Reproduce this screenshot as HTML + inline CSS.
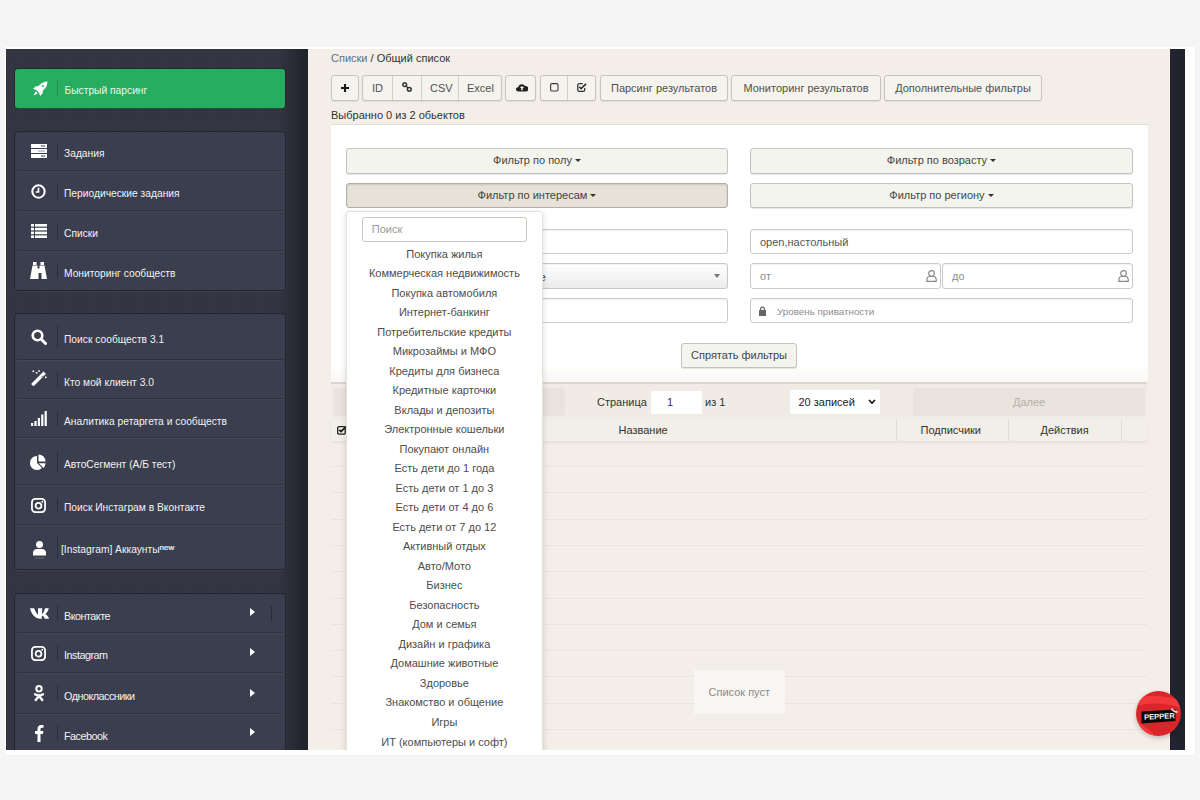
<!DOCTYPE html><html><head><meta charset="utf-8"><style>
*{box-sizing:border-box;margin:0;padding:0}
html,body{width:1200px;height:800px;overflow:hidden;background:#f5f5f5;font-family:"Liberation Sans",sans-serif}
div,span,svg{position:absolute}
#frame{left:5px;top:47px;width:1190px;height:708px;background:#fff}
#shot{left:0;top:0;width:1200px;height:800px;clip-path:inset(49px 15px 50px 6px);background:#f3eee7}
#side{left:6px;top:49px;width:302px;height:701px;background:#343744;
 background-image:linear-gradient(90deg,rgba(0,0,0,0) 272px,rgba(0,0,0,.38) 302px),repeating-linear-gradient(0deg,rgba(0,0,0,.045) 0 1px,rgba(0,0,0,0) 1px 3px),repeating-linear-gradient(90deg,rgba(0,0,0,.045) 0 1px,rgba(0,0,0,0) 1px 3px)}
#rbar{left:1170px;top:49px;width:15px;height:701px;background:#21242e}
.green{left:14.5px;top:68.5px;width:270.5px;height:39px;background:#27ad60;border-radius:3px;box-shadow:0 1px 0 #1b4f33,0 0 0 1px #22262e}
.panel{left:14.5px;width:270.5px;background:#3a3e4e;border-radius:4px;box-shadow:0 0 0 1px #22252f,0 1px 0 1px rgba(255,255,255,.05)}
.rdiv{left:2.5px;right:2.5px;height:2px;border-top:1px solid #2e313d;border-bottom:1px solid #424656}
.ico{color:#fff}
.sep{width:1px;height:15px;background:#2a2d39}
.lbl{font-size:10.25px;color:#f2f2f2;white-space:nowrap;line-height:12px}
.arr{width:0;height:0;border-top:4.5px solid transparent;border-bottom:4.5px solid transparent;border-left:5.5px solid #fff}
.btn{top:75px;height:26px;background:#f5f3ee;border:1px solid #c8c4bb;border-radius:3px;font-size:11px;color:#505050;text-align:center;line-height:25px;white-space:nowrap;box-shadow:0 1px 1px rgba(0,0,0,.08)}
.bdiv{top:0;width:1px;height:24px;background:#d3cfc7}
.txt{font-size:11px;color:#333;white-space:nowrap;line-height:13px}
.fbtn{height:25px;background:#f4f4ee;border:1px solid #c3c3bf;border-radius:3px;font-size:11px;color:#444;text-align:center;line-height:23px;box-shadow:0 1px 1px rgba(0,0,0,.1);white-space:nowrap}
.inp{height:25px;background:#fff;border:1px solid #cbcbcb;border-radius:3px;font-size:11px;color:#555;box-shadow:inset 0 1px 1px rgba(0,0,0,.06);line-height:25px;padding-left:9px;white-space:nowrap}
.ph{color:#8e8e8e}
.item{left:0;width:100%;text-align:center;font-size:11px;color:#4d4d4d;white-space:nowrap;line-height:13px}
.tline{left:331px;width:816px;height:1px;background:#eae4da}
</style></head><body>
<div id="frame"></div><div id="shot">
<div id="side"></div>
<div id="rbar"></div>
<div class="green"><svg class="ico" style="left:17px;top:12px" width="16" height="16" viewBox="0 0 16 16"><path fill="#fff" d="M15.5.5C12 .5 9 2 6.5 5L3.5 5.5 1 8l3 .8L7.2 12l.8 3 2.5-2.5.5-3C14 7 15.5 4 15.5.5z"/><circle cx="11" cy="5" r="1" fill="#29ae61"/><path fill="#fff" d="M3.6 10.2 1.5 14.5l4.3-2.1z"/></svg><div class="sep" style="left:42.5px;top:12px;background:#218c4e"></div><div class="lbl" style="left:50px;top:16px;color:#e9f6ee">Быстрый парсинг</div></div>
<div class="panel" style="top:131.5px;height:158.5px">
<div style="left:0;top:19.75px;width:100%;height:0">
<svg style="left:16px;top:-7px" width="16" height="14" viewBox="0 0 16 14"><rect x="0" y="0" width="16" height="4" fill="#fff"/><rect x="0" y="5" width="16" height="4" fill="#fff"/><rect x="0" y="10" width="16" height="4" fill="#fff"/><rect x="10" y="1.5" width="4" height="1" fill="#3a3e4f"/><rect x="7" y="6.5" width="7" height="1" fill="#9a9ca4"/><rect x="10" y="11.5" width="4" height="1" fill="#3a3e4f"/></svg>
<div class="sep" style="left:42.5px;top:-7.5px;height:15px"></div>
<div class="lbl" style="left:49.5px;top:-3px;">Задания</div>
</div>
<div class="rdiv" style="top:38.5px"></div>
<div style="left:0;top:59.5px;width:100%;height:0">
<svg style="left:16.5px;top:-7.5px" width="15" height="15" viewBox="0 0 16 16"><circle cx="8" cy="8" r="6.6" fill="none" stroke="#fff" stroke-width="2.2"/><path d="M8 4v4.5H5" fill="none" stroke="#fff" stroke-width="1.8"/></svg>
<div class="sep" style="left:42.5px;top:-7.5px;height:15px"></div>
<div class="lbl" style="left:49.5px;top:-3px;">Периодические задания</div>
</div>
<div class="rdiv" style="top:78.5px"></div>
<div style="left:0;top:99.5px;width:100%;height:0">
<svg style="left:16px;top:-7px" width="16" height="14" viewBox="0 0 16 14"><g fill="#fff"><rect x="0" y="0" width="3" height="2.6"/><rect x="4" y="0" width="12" height="2.6"/><rect x="0" y="3.8" width="3" height="2.6"/><rect x="4" y="3.8" width="12" height="2.6"/><rect x="0" y="7.6" width="3" height="2.6"/><rect x="4" y="7.6" width="12" height="2.6"/><rect x="0" y="11.4" width="3" height="2.6"/><rect x="4" y="11.4" width="12" height="2.6"/></g></svg>
<div class="sep" style="left:42.5px;top:-7.5px;height:15px"></div>
<div class="lbl" style="left:49.5px;top:-3px;">Списки</div>
</div>
<div class="rdiv" style="top:118.5px"></div>
<div style="left:0;top:139px;width:100%;height:0">
<svg style="left:15.5px;top:-8.5px" width="17" height="17" viewBox="0 0 17 17"><g fill="#fff"><rect x="3" y="0" width="3.5" height="3"/><rect x="10.5" y="0" width="3.5" height="3"/><path d="M2.5 3.5h5v3h2v-3h5L17 17h-5.5V11h-3v6H0z"/></g></svg>
<div class="sep" style="left:42.5px;top:-7.5px;height:15px"></div>
<div class="lbl" style="left:49.5px;top:-3px;">Мониторинг сообществ</div>
</div>
</div>
<div class="panel" style="top:313.5px;height:255.5px">
<div style="left:0;top:23.25px;width:100%;height:0">
<svg style="left:16px;top:-8px" width="16" height="16" viewBox="0 0 16 16"><circle cx="6.5" cy="6.5" r="4.8" fill="none" stroke="#fff" stroke-width="2.6"/><path d="M10 10l4.5 4.5" stroke="#fff" stroke-width="3" stroke-linecap="round"/></svg>
<div class="sep" style="left:42.5px;top:-11px;height:22px"></div>
<div class="lbl" style="left:49.5px;top:-3px;">Поиск сообществ 3.1</div>
</div>
<div class="rdiv" style="top:45.5px"></div>
<div style="left:0;top:66px;width:100%;height:0">
<svg style="left:16px;top:-9.5px" width="16" height="16" viewBox="0 0 16 16"><path d="M2.5 14l10-10" stroke="#fff" stroke-width="3.4" stroke-linecap="square"/><path d="M10.3 7.3l1.6-1.6" stroke="#3a3e4f" stroke-width=".9"/><g fill="#fff"><rect x="1.5" y=".5" width="1.6" height="1.6"/><rect x="4.8" y="2" width="1.6" height="1.6"/><rect x="7.2" y=".2" width="1.6" height="1.6"/><rect x="14" y="6.5" width="1.6" height="1.6"/></g></svg>
<div class="sep" style="left:42.5px;top:-7.5px;height:15px"></div>
<div class="lbl" style="left:49.5px;top:-3px;">Кто мой клиент 3.0</div>
</div>
<div class="rdiv" style="top:84.5px"></div>
<div style="left:0;top:105px;width:100%;height:0">
<svg style="left:16px;top:-7.5px" width="16" height="15" viewBox="0 0 16 15"><g fill="#fff"><rect x="0" y="12" width="2.2" height="3"/><rect x="3.4" y="10" width="2.2" height="5"/><rect x="6.8" y="7" width="2.2" height="8"/><rect x="10.2" y="3.5" width="2.2" height="11.5"/><rect x="13.6" y="0" width="2.2" height="15"/></g></svg>
<div class="sep" style="left:42.5px;top:-7.5px;height:15px"></div>
<div class="lbl" style="left:49.5px;top:-3px;">Аналитика ретаргета и сообществ</div>
</div>
<div class="rdiv" style="top:123.5px"></div>
<div style="left:0;top:148px;width:100%;height:0">
<svg style="left:15.5px;top:-8px" width="16" height="16" viewBox="0 0 16 16"><path d="M7 9V2A7 7 0 1 0 11.95 13.95z" fill="#fff"/><path d="M8.5 7.5V.5A7 7 0 0 1 15.5 7.5z" fill="#fff"/><path d="M8.7 9.2h6.8A7 7 0 0 1 13.5 14z" fill="#fff"/></svg>
<div class="sep" style="left:42.5px;top:-11px;height:22px"></div>
<div class="lbl" style="left:49.5px;top:-3px;">АвтоСегмент (А/Б тест)</div>
</div>
<div class="rdiv" style="top:170.5px"></div>
<div style="left:0;top:191.5px;width:100%;height:0">
<svg style="left:16.5px;top:-7.5px" width="15" height="15" viewBox="0 0 16 16"><rect x="1" y="1" width="14" height="14" rx="3.5" fill="none" stroke="#fff" stroke-width="1.9"/><circle cx="8" cy="8.2" r="3.1" fill="none" stroke="#fff" stroke-width="1.9"/><circle cx="12" cy="4" r="1" fill="#fff"/></svg>
<div class="sep" style="left:42.5px;top:-7.5px;height:15px"></div>
<div class="lbl" style="left:49.5px;top:-3px;">Поиск Инстаграм в Вконтакте</div>
</div>
<div class="rdiv" style="top:210.5px"></div>
<div style="left:0;top:233.5px;width:100%;height:0">
<svg style="left:18px;top:-8.5px" width="13" height="20" viewBox="0 0 13 20"><circle cx="6.5" cy="5.4" r="3.5" fill="#fff"/><path d="M0 16.5V13.6C0 11.5 1.8 10 4 10h5c2.2 0 4 1.5 4 3.6v2.9z" fill="#fff"/><rect x="1.5" y="18.7" width="10" height=".8" fill="#6d707b"/></svg>
<div class="sep" style="left:42.5px;top:-11px;height:22px"></div>
<div class="lbl" style="left:49.5px;top:-3px;"><span style="position:relative;left:-3px">[Instagram] Аккаунты<sup style="font-size:8px;vertical-align:top;position:relative;top:-2.5px;-webkit-text-stroke:.2px #fff">new</sup></span></div>
</div>
</div>
<div class="panel" style="top:593.5px;height:196.5px">
<div style="left:0;top:19.75px;width:100%;height:0">
<svg style="left:15px;top:-5.5px" width="19" height="11" viewBox="0 0 19 11"><path fill="#fff" d="M0 .3h3.8c.3 0 .5.2.6.4C5.5 3.4 6.8 6 8 6.6V.3h4.2l-.3 5.8C13 5.6 14.5 3 15 .3h3.8c-.5 2.8-2.5 5-3.5 5.7 1.2.6 3 2.3 3.7 4.8h-4c-.6-1.3-1.7-3-3.2-3.4V10.8h-1.3C5 10.8 1.5 6.5 0 .3z"/></svg>
<div class="sep" style="left:42.5px;top:-7.5px;height:15px"></div>
<div class="lbl" style="left:49.5px;top:-3px;font-size:10.8px;letter-spacing:-.5px">Вконтакте</div>
<div class="arr" style="left:235.5px;top:-5px"></div>
<div class="sep" style="left:256.5px;top:-7.5px"></div>
</div>
<div class="rdiv" style="top:38.5px"></div>
<div style="left:0;top:59.5px;width:100%;height:0">
<svg style="left:16.5px;top:-7.5px" width="15" height="15" viewBox="0 0 16 16"><rect x="1" y="1" width="14" height="14" rx="3.5" fill="none" stroke="#fff" stroke-width="1.9"/><circle cx="8" cy="8.2" r="3.1" fill="none" stroke="#fff" stroke-width="1.9"/><circle cx="12" cy="4" r="1" fill="#fff"/></svg>
<div class="sep" style="left:42.5px;top:-7.5px;height:15px"></div>
<div class="lbl" style="left:49.5px;top:-4px;font-size:10.8px;letter-spacing:-.5px">Instagram</div>
<div class="arr" style="left:235.5px;top:-5px"></div>
</div>
<div class="rdiv" style="top:78.5px"></div>
<div style="left:0;top:100px;width:100%;height:0">
<svg style="left:19.5px;top:-8.5px" width="10" height="17" viewBox="0 0 10 17"><circle cx="5" cy="3.7" r="2.7" fill="none" stroke="#fff" stroke-width="2"/><path d="M1 9.3c2.6 1.6 5.4 1.6 8 0M5 10.8 1.8 15M5 10.8l3.2 4.2" fill="none" stroke="#fff" stroke-width="2.4" stroke-linecap="round"/></svg>
<div class="sep" style="left:42.5px;top:-7.5px;height:15px"></div>
<div class="lbl" style="left:49.5px;top:-4px;font-size:10.8px;letter-spacing:-.5px">Одноклассники</div>
<div class="arr" style="left:235.5px;top:-5px"></div>
</div>
<div class="rdiv" style="top:119.5px"></div>
<div style="left:0;top:139.5px;width:100%;height:0">
<svg style="left:20px;top:-8.5px" width="9" height="17" viewBox="0 0 9 17"><path fill="#fff" d="M2.5 17V9H0V6h2.5V4c0-2.6 1.5-4 3.8-4 1.1 0 2 .1 2.2.1v2.7H7c-1.2 0-1.5.6-1.5 1.4V6H8.4L8 9H5.5v8z"/></svg>
<div class="sep" style="left:42.5px;top:-7.5px;height:15px"></div>
<div class="lbl" style="left:49.5px;top:-3px;font-size:10.8px;letter-spacing:-.5px">Facebook</div>
<div class="arr" style="left:235.5px;top:-5px"></div>
</div>
</div>
<div class="txt" style="left:331px;top:52px"><span style="position:relative;color:#5d7089">Списки</span> / Общий список</div>
<div class="btn" style="left:331px;width:28px;"><svg style="left:9px;top:7.5px" width="8" height="8" viewBox="0 0 8 8"><path d="M4 0v8M0 4h8" stroke="#1a1a1a" stroke-width="2.1"/></svg></div>
<div class="btn" style="left:362px;width:140px;"><span style="left:9px;top:0">ID</span><div class="bdiv" style="left:28.5px"></div><svg style="left:38.5px;top:6px" width="10" height="10" viewBox="0 0 10 10"><g fill="none" stroke="#333" stroke-width="1.5"><circle cx="2.7" cy="2.7" r="1.9"/><circle cx="7.3" cy="7.3" r="1.9"/><path d="M4 4l2 2"/></g></svg><div class="bdiv" style="left:57.5px"></div><span style="left:67px;top:0">CSV</span><div class="bdiv" style="left:94.5px"></div><span style="left:104px;top:0">Excel</span></div>
<div class="btn" style="left:505px;width:31px;"><svg style="left:9.5px;top:7px" width="12" height="8.5" viewBox="0 0 12 10" preserveAspectRatio="none"><path fill="#222" d="M3 10H2.5A2.5 2.5 0 0 1 2.3 5 3.5 3.5 0 0 1 9 3.6 3.2 3.2 0 0 1 9.5 10z"/><path fill="#f5f3ee" d="M6 3.5 3.8 6h1.4v2.5h1.6V6h1.4z"/></svg></div>
<div class="btn" style="left:540px;width:56px;"><svg style="left:9px;top:7px" width="9" height="9" viewBox="0 0 9 9"><rect x=".6" y=".6" width="7.4" height="7.4" rx="1.4" fill="none" stroke="#3a3a3a" stroke-width="1.1"/></svg><div class="bdiv" style="left:26px"></div><svg style="left:35.5px;top:7px" width="10" height="9" viewBox="0 0 11 10"><path d="M8.5 5.5v2.2a1.5 1.5 0 0 1-1.5 1.5H2.3A1.5 1.5 0 0 1 .8 7.7V2.3A1.5 1.5 0 0 1 2.3.8h4" fill="none" stroke="#333" stroke-width="1.4"/><path d="M2.5 4.3 4.5 6.3 10 1" fill="none" stroke="#333" stroke-width="1.7"/></svg></div>
<div class="btn" style="left:600px;width:128px;">Парсинг результатов</div>
<div class="btn" style="left:731px;width:150px;">Мониторинг результатов</div>
<div class="btn" style="left:884px;width:158px;">Дополнительные фильтры</div>
<div class="txt" style="left:331px;top:109px">Выбранно 0 из 2 обьектов</div>
<div style="left:331px;top:123.5px;width:816.5px;height:260px;background:linear-gradient(#fff 0,#fff 240px,#f8f7f4 258px);border-top:1px solid #e3ded5"></div>
<div class="fbtn" style="left:346px;top:148px;width:382px;height:26px;">Фильтр по полу <span style="position:relative;display:inline-block;width:0;height:0;border-left:3px solid transparent;border-right:3px solid transparent;border-top:3px solid #333;top:-2px"></span></div>
<div class="fbtn" style="left:750px;top:148px;width:383px;height:26px;">Фильтр по возрасту <span style="position:relative;display:inline-block;width:0;height:0;border-left:3px solid transparent;border-right:3px solid transparent;border-top:3px solid #333;top:-2px"></span></div>
<div class="fbtn" style="left:346px;top:183px;width:382px;height:25px;background:#e7e2d8;border-color:#b3aea4;box-shadow:inset 0 1px 2px rgba(0,0,0,.12)">Фильтр по интересам <span style="position:relative;display:inline-block;width:0;height:0;border-left:3px solid transparent;border-right:3px solid transparent;border-top:3px solid #333;top:-2px"></span></div>
<div class="fbtn" style="left:750px;top:183px;width:383px;height:25px;">Фильтр по региону <span style="position:relative;display:inline-block;width:0;height:0;border-left:3px solid transparent;border-right:3px solid transparent;border-top:3px solid #333;top:-2px"></span></div>
<div class="inp" style="left:346px;top:229px;width:382px;height:25px;"></div>
<div class="inp" style="left:750px;top:229px;width:383px;height:25px;">open,настольный</div>
<div class="inp" style="left:346px;top:263px;width:382px;height:26px;background:linear-gradient(#fff,#ececec);border-color:#c6c6c6"><span style="right:181px;top:0.5px;color:#444">Выберите значение</span><div style="left:367px;top:10px;width:0;height:0;border-left:3.5px solid transparent;border-right:3.5px solid transparent;border-top:4px solid #777"></div></div>
<div class="inp" style="left:750px;top:263px;width:191px;height:26px;"><span class="ph" style="left:9px;top:0">от</span><svg style="left:175px;top:6px" width="11" height="12" viewBox="0 0 11 12"><circle cx="5.5" cy="3.5" r="2.8" fill="none" stroke="#888" stroke-width="1.2"/><path d="M.8 11.3V9.5c0-1.8 1.3-3 3-3h3.4c1.7 0 3 1.2 3 3v1.8z" fill="none" stroke="#888" stroke-width="1.2"/></svg></div>
<div class="inp" style="left:942px;top:263px;width:191px;height:26px;"><span class="ph" style="left:9px;top:0">до</span><svg style="left:175px;top:6px" width="11" height="12" viewBox="0 0 11 12"><circle cx="5.5" cy="3.5" r="2.8" fill="none" stroke="#888" stroke-width="1.2"/><path d="M.8 11.3V9.5c0-1.8 1.3-3 3-3h3.4c1.7 0 3 1.2 3 3v1.8z" fill="none" stroke="#888" stroke-width="1.2"/></svg></div>
<div class="inp" style="left:346px;top:298px;width:382px;height:25px;"></div>
<div class="inp" style="left:750px;top:298px;width:383px;height:25px;"><svg style="left:6.5px;top:6.5px" width="9" height="10" viewBox="0 0 9 10"><path fill="#666" d="M2 4V3a2.5 2.5 0 0 1 5 0v1h1v6H1V4zm1.3 0h2.4V3A1.2 1.2 0 0 0 3.3 3z"/></svg><span class="ph" style="left:26px;top:0;font-size:9.8px">Уровень приватности</span></div>
<div class="fbtn" style="left:681.25px;top:342.5px;width:115.5px;height:25px">Спрятать фильтры</div>
<div style="left:331px;top:382px;width:816px;height:36.5px;background:#f0ebe4;border-top:2px solid #dbd6cd"></div>
<div style="left:333.5px;top:387.5px;width:231.5px;height:28.5px;background:#e8e3dc;border-radius:3px"></div>
<div class="txt" style="left:597px;top:395.5px">Страница</div>
<div style="left:650.5px;top:390.5px;width:51px;height:23.5px;background:#fff;font-size:11px;color:#333;line-height:23px;padding-left:16.5px">1</div>
<div class="txt" style="left:705px;top:395.5px">из 1</div>
<div style="left:789.5px;top:390px;width:90.5px;height:24px;background:#fff;border-radius:2px;font-size:11px;color:#222;line-height:24px;padding-left:9px">20 записей<svg style="left:78px;top:9px" width="8" height="6" viewBox="0 0 8 6"><path d="M1 1l3 3 3-3" fill="none" stroke="#111" stroke-width="1.6"/></svg></div>
<div style="left:913.25px;top:387.5px;width:231.75px;height:28.75px;background:#e8e3dc;border-radius:3px;font-size:11px;color:#b5b0a8;text-align:center;line-height:28px">Далее</div>
<div style="left:331px;top:418.75px;width:816px;height:22.5px;background:#f2eee8;box-shadow:0 2px 3px rgba(0,0,0,.06)"></div>
<div style="left:896.25px;top:419px;width:1px;height:22px;background:#e2ddd4"></div>
<div style="left:1008.25px;top:419px;width:1px;height:22px;background:#e2ddd4"></div>
<div style="left:1120.5px;top:419px;width:1px;height:22px;background:#e2ddd4"></div>
<svg style="left:337px;top:425.5px" width="10" height="9" viewBox="0 0 10 9"><rect x=".7" y=".7" width="7.5" height="7.5" rx="1.3" fill="none" stroke="#222" stroke-width="1.3"/><path d="M2.3 3.8 4 5.5 9.3 .6" fill="none" stroke="#222" stroke-width="1.8"/></svg>
<div class="txt" style="left:618.5px;top:423.5px">Название</div>
<div class="txt" style="left:920.5px;top:423.5px">Подписчики</div>
<div class="txt" style="left:1040.5px;top:423.5px">Действия</div>
<div class="tline" style="top:466px"></div>
<div class="tline" style="top:492.3px"></div>
<div class="tline" style="top:518.6px"></div>
<div class="tline" style="top:544.9px"></div>
<div class="tline" style="top:571.2px"></div>
<div class="tline" style="top:597.5px"></div>
<div class="tline" style="top:623.8px"></div>
<div class="tline" style="top:650.1px"></div>
<div class="tline" style="top:676.4px"></div>
<div class="tline" style="top:702.7px"></div>
<div class="tline" style="top:729px"></div>
<div style="left:693.75px;top:669.75px;width:91px;height:44.5px;background:#f8f6f2;font-size:11px;color:#8a8a8a;text-align:center;line-height:44px">Список пуст</div>
<div style="left:346.25px;top:210.5px;width:196.25px;height:560px;background:#fff;border:1px solid #e6e2da;border-radius:3px;box-shadow:0 2px 6px rgba(0,0,0,.15)">
<div style="left:14.5px;top:5px;width:165.5px;height:25.5px;border:1px solid #ccc8c0;border-radius:3px;font-size:11px;color:#9a9a9a;line-height:23px;padding-left:9px">Поиск</div>
<div class="item" style="top:36px">Покупка жилья</div>
<div class="item" style="top:55.52px">Коммерческая недвижимость</div>
<div class="item" style="top:75.04px">Покупка автомобиля</div>
<div class="item" style="top:94.56px">Интернет-банкинг</div>
<div class="item" style="top:114.08px">Потребительские кредиты</div>
<div class="item" style="top:133.6px">Микрозаймы и МФО</div>
<div class="item" style="top:153.12px">Кредиты для бизнеса</div>
<div class="item" style="top:172.64px">Кредитные карточки</div>
<div class="item" style="top:192.16px">Вклады и депозиты</div>
<div class="item" style="top:211.68px">Электронные кошельки</div>
<div class="item" style="top:231.2px">Покупают онлайн</div>
<div class="item" style="top:250.72px">Есть дети до 1 года</div>
<div class="item" style="top:270.24px">Есть дети от 1 до 3</div>
<div class="item" style="top:289.76px">Есть дети от 4 до 6</div>
<div class="item" style="top:309.28px">Есть дети от 7 до 12</div>
<div class="item" style="top:328.8px">Активный отдых</div>
<div class="item" style="top:348.32px">Авто/Мото</div>
<div class="item" style="top:367.84px">Бизнес</div>
<div class="item" style="top:387.36px">Безопасность</div>
<div class="item" style="top:406.88px">Дом и семья</div>
<div class="item" style="top:426.4px">Дизайн и графика</div>
<div class="item" style="top:445.92px">Домашние животные</div>
<div class="item" style="top:465.44px">Здоровье</div>
<div class="item" style="top:484.96px">Знакомство и общение</div>
<div class="item" style="top:504.48px">Игры</div>
<div class="item" style="top:524px">ИТ (компьютеры и софт)</div>
<div class="item" style="top:543.52px">Кино</div>
</div>
<div style="left:1136px;top:691px;width:45px;height:45px;border-radius:50%;box-shadow:0 2px 5px rgba(0,0,0,.22)"></div>
<svg style="left:1136px;top:691px" width="45" height="45" viewBox="0 0 45 45"><defs><clipPath id="pc"><circle cx="22.5" cy="22.5" r="22.5"/></clipPath></defs><g clip-path="url(#pc)"><rect width="45" height="45" fill="#d8262b"/><path d="M0 8C10 4 25 3 45 10V17C30 12 15 11 0 15z" fill="#f2383b"/><path d="M0 30C8 34 14 40 20 45H0z" fill="#f2383b"/><path d="M5.5 20.5 39.5 18.5 39.5 30 5.5 32.5z" fill="#0a0a0a"/><path d="M36 17c1 2 3 3 6 3.5l-1 1.5c-3-.5-5-2-6-4z" fill="#f5e6e6"/></g></svg>
<div style="left:1143.5px;top:712px;width:32px;height:10px;font-size:7.6px;font-weight:bold;color:#f4f4f4;line-height:10px;transform:rotate(-3deg)"><span style="position:static">PEPPER</span></div>
</div></body></html>
